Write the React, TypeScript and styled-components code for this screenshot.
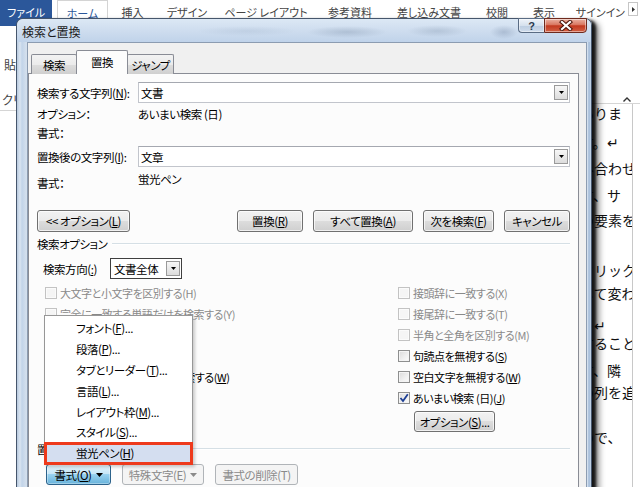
import React from "react";
import styled, { createGlobalStyle, css } from "styled-components";

const GlobalStyle = createGlobalStyle`
  html, body { margin: 0; padding: 0; background: #fff; }
  body { font-family: "Noto Sans CJK JP", "Noto Sans", sans-serif; }
  *, *::before, *::after { box-sizing: border-box; }
`;

const Screen = styled.div`
  position: relative;
  width: 640px;
  height: 487px;
  overflow: hidden;
  background: #fff;
  font-family: "Noto Sans CJK JP", "Noto Sans", sans-serif;
`;

/* ---------- Word background ---------- */
const Word = styled.div`
  display: flex;
  flex-direction: column;
  width: 100%;
  height: 100%;
`;

const RibbonTabs = styled.div`
  display: flex;
  flex: none;
  height: 26px;
  font-size: 11px;
  color: #444;
  font-feature-settings: "palt";
`;

const RibbonTab = styled.div<{ $w: number; $variant?: "file" | "active" | "end" }>`
  flex: none;
  width: ${(p) => p.$w}px;
  height: 100%;
  display: flex;
  justify-content: center;
  padding-top: 3px;
  line-height: 18px;
  white-space: nowrap;
  ${(p) =>
    p.$variant === "file" &&
    css`
      background: #2b579a;
      color: #fff;
    `}
  ${(p) =>
    p.$variant === "active" &&
    css`
      border: 1px solid #d4d4d4;
      border-bottom: none;
      color: #2b579a;
    `}
  ${(p) =>
    p.$variant === "end" &&
    css`
      justify-content: flex-end;
      padding-right: 3px;
    `}
`;

const TabGap = styled.div`
  flex: none;
  width: 5px;
`;

const OverflowBtn = styled.div`
  flex: none;
  width: 10px;
  height: 14px;
  margin-top: 2px;
  border: 1px solid #c6c6c6;
  display: flex;
  align-items: center;
  justify-content: center;
`;

const WordBody = styled.div`
  flex: 1;
  display: flex;
  min-height: 0;
`;

const LeftStrip = styled.div`
  flex: none;
  width: 16px;
  overflow: hidden;
  white-space: nowrap;
  font-size: 12px;
  color: #444;
  font-feature-settings: "palt";
`;

const StripPaste = styled.div`
  padding: 29px 0 0 4px;
  line-height: 20px;
`;

const StripGroup = styled.div`
  margin-top: 15px;
  padding-left: 2px;
  line-height: 20px;
  border-bottom: 1px solid #d5d5d5;
`;

const WordMiddle = styled.div`
  flex: 1;
`;

const RightStrip = styled.div`
  flex: none;
  width: 48px;
  display: flex;
  flex-direction: column;
`;

const RibbonRest = styled.div`
  flex: none;
  height: 78px;
  border-bottom: 1px solid #d5d5d5;
  display: flex;
  align-items: flex-end;
  justify-content: flex-end;
  padding: 0 9px 1px 0;
`;

const DocArea = styled.div`
  flex: 1;
  width: 41px;
  overflow: hidden;
  border-right: 1px solid #c8c8c8;
  font-size: 14px;
  color: #111;
  white-space: nowrap;
`;

const DocLine = styled.div<{ $mt: number }>`
  margin-top: ${(p) => p.$mt}px;
  margin-left: -12px;
  line-height: 18px;
  height: 18px;
`;

/* ---------- Dialog ---------- */
const Dialog = styled.div`
  position: absolute;
  left: 16px;
  top: 18px;
  width: 576px;
  height: 480px;
  display: flex;
  flex-direction: column;
  border: 1px solid #46566c;
  border-bottom: none;
  border-radius: 7px 7px 0 0;
  background: linear-gradient(
    90deg,
    #b7c9de 0px,
    #dae5f1 3px,
    #c2d4e9 5px,
    #d3dfed 9px,
    #d3dfed calc(100% - 7px),
    #e3ecf6 calc(100% - 4px),
    #9fb8d6 calc(100% - 2px),
    #c8d7e9 100%
  );
  box-shadow: 4px 2px 3px rgba(0, 0, 0, 0.85), 7px 4px 6px rgba(0, 0, 0, 0.45);
  font-family: "Noto Sans CJK JP", "Noto Sans", sans-serif;
  font-size: 11.5px;
  letter-spacing: -0.45px;
  font-feature-settings: "palt";
  color: #000;
`;

const TitleBar = styled.div`
  flex: none;
  height: 23px;
  display: flex;
  align-items: flex-start;
  padding: 0 4px 0 5px;
  border-radius: 6px 6px 0 0;
  background:
    radial-gradient(ellipse 40px 6px at 330px 13px, rgba(120, 140, 165, 0.35), transparent),
    radial-gradient(ellipse 30px 6px at 420px 12px, rgba(120, 140, 165, 0.3), transparent),
    radial-gradient(ellipse 14px 7px at 487px 13px, rgba(110, 130, 160, 0.35), transparent),
    radial-gradient(ellipse 50px 5px at 230px 12px, rgba(150, 170, 195, 0.25), transparent),
    linear-gradient(180deg, #dce8f5 0%, #cddcee 55%, #c0d3ea 100%);
`;

const Title = styled.div`
  padding-top: 1px;
  line-height: 23px;
  font-size: 12px;
  letter-spacing: 0;
  color: #1a1a1a;
`;

const CaptionGroup = styled.div`
  margin-left: auto;
  margin-top: -1px;
  display: flex;
`;

const CaptionBtn = styled.div<{ $kind: "help" | "close" }>`
  height: 15px;
  display: flex;
  align-items: center;
  justify-content: center;
  border: 1px solid #5a6c84;
  box-shadow: inset 0 0 0 1px rgba(255, 255, 255, 0.45);
  ${(p) =>
    p.$kind === "help"
      ? css`
          width: 26px;
          border-right: none;
          border-radius: 0 0 0 4px;
          background: linear-gradient(180deg, #eef3f9 0%, #d6e1ee 50%, #bccde1 51%, #cfdcec 100%);
          font-size: 11px;
          font-weight: bold;
          color: #2b3a4e;
          font-family: "Liberation Sans", sans-serif;
        `
      : css`
          width: 43px;
          border-color: #6e2a1e;
          border-radius: 0 0 4px 0;
          background: linear-gradient(180deg, #eab2a3 0%, #d9765f 45%, #c2391f 52%, #d26145 100%);
        `}
`;

const FrameBody = styled.div`
  flex: 1;
  display: flex;
  padding: 0 4px 0 10px;
  min-height: 0;
`;

const Client = styled.div`
  flex: 1;
  display: flex;
  flex-direction: column;
  background: #f0f0f0;
  border: 1px solid #8c9cb1;
  border-bottom: none;
  padding: 7px 7px 0 0;
`;

const TabStrip = styled.div`
  flex: none;
  height: 24px;
  margin-bottom: -1px;
  padding-left: 3px;
  display: flex;
  align-items: flex-end;
  position: relative;
  z-index: 1;
`;

const Tab = styled.div<{ $w: number; $selected?: boolean; $first?: boolean }>`
  flex: none;
  width: ${(p) => p.$w}px;
  margin-left: ${(p) => (p.$first ? 0 : -1)}px;
  border: 1px solid #898c95;
  border-bottom: none;
  border-radius: 2px 2px 0 0;
  display: flex;
  justify-content: center;
  align-items: center;
  ${(p) =>
    p.$selected
      ? css`
          height: 24px;
          background: #fcfcfc;
          position: relative;
          z-index: 1;
          padding-bottom: 2px;
        `
      : css`
          height: 20px;
          background: linear-gradient(180deg, #f3f3f3 0%, #ebebeb 50%, #dddddd 51%, #cfcfcf 100%);
          padding-top: 1px;
        `}
`;

const Panel = styled.div`
  flex: 1;
  display: flex;
  flex-direction: column;
  background: #fcfcfc;
  border: 1px solid #898c95;
  border-bottom: none;
  padding: 8px 8px 0 8px;
`;

const FieldRow = styled.div<{ $mt?: number }>`
  flex: none;
  display: flex;
  align-items: center;
  height: 21px;
  margin-top: ${(p) => p.$mt ?? 0}px;
`;

const FieldLabel = styled.div`
  flex: none;
  width: 101px;
  white-space: nowrap;
`;

const Combo = styled.div`
  flex: 1;
  height: 21px;
  display: flex;
  align-items: center;
  padding-left: 2px;
  background: #fff;
  border: 1px solid #c2c5cc;
  border-top-color: #a5a8b0;
`;

const DropBtn = styled.span`
  flex: none;
  width: 14px;
  height: 15px;
  margin-left: auto;
  margin-right: 1px;
  border: 1px solid #9a9a9a;
  background: linear-gradient(180deg, #f7f7f7, #dcdcdc);
  display: flex;
  align-items: center;
  justify-content: center;
`;

const InfoRow = styled.div<{ $h: number; $mt?: number }>`
  flex: none;
  display: flex;
  align-items: flex-start;
  height: ${(p) => p.$h}px;
  margin-top: ${(p) => p.$mt ?? 0}px;
  white-space: nowrap;
`;

const InfoLabel = styled.div<{ $pt?: number }>`
  flex: none;
  width: 101px;
  padding-top: ${(p) => p.$pt ?? 0}px;
  line-height: 18px;
`;

const InfoValue = styled.div<{ $pt?: number }>`
  padding-top: ${(p) => p.$pt ?? 0}px;
  line-height: 18px;
`;

const ButtonRow = styled.div`
  flex: none;
  display: flex;
  justify-content: space-between;
  margin-top: 17px;
`;

const BtnGroup = styled.div<{ $gap: number }>`
  display: flex;
  gap: ${(p) => p.$gap}px;
`;

const Btn = styled.div<{ $w: number; $h?: number; $kind?: "disabled" | "pressed" }>`
  flex: none;
  width: ${(p) => p.$w}px;
  height: ${(p) => p.$h ?? 22}px;
  display: flex;
  align-items: center;
  justify-content: center;
  gap: 4px;
  white-space: nowrap;
  border: 1px solid #707070;
  border-radius: 3px;
  background: linear-gradient(180deg, #f2f2f2 0%, #ebebeb 49%, #dddddd 50%, #cfcfcf 100%);
  box-shadow: inset 0 0 0 1px rgba(255, 255, 255, 0.7);
  ${(p) =>
    p.$kind === "disabled" &&
    css`
      border-color: #b0b4b8;
      background: #f4f4f4;
      color: #8a8a8a;
      box-shadow: none;
    `}
  ${(p) =>
    p.$kind === "pressed" &&
    css`
      border-color: #2c628b;
      background: linear-gradient(180deg, #e5f4fc 0%, #c4e5f6 49%, #98d1ef 50%, #68b3db 100%);
      box-shadow: inset 0 0 0 1px rgba(255, 255, 255, 0.35);
    `}
`;

const SectionRow = styled.div<{ $mt: number }>`
  flex: none;
  display: flex;
  align-items: center;
  height: 18px;
  margin-top: ${(p) => p.$mt}px;
  white-space: nowrap;
`;

const SectionLine = styled.div`
  flex: 1;
  margin-left: 5px;
  height: 2px;
  border-top: 1px solid #d5dfe5;
  border-bottom: 1px solid #fff;
`;

const DirectionRow = styled.div`
  flex: none;
  display: flex;
  align-items: center;
  height: 21px;
  margin-top: 5px;
  padding-left: 6px;
`;

const DirLabel = styled.div`
  flex: none;
  width: 67px;
  white-space: nowrap;
`;

const Select = styled.div`
  flex: none;
  width: 72px;
  height: 21px;
  display: flex;
  align-items: center;
  padding-left: 3px;
  background: #fff;
  border: 1px solid #3f3f3f;
`;

const OptionsArea = styled.div`
  flex: none;
  display: flex;
  margin-top: 3px;
  padding-left: 8px;
`;

const OptCol = styled.div<{ $w?: number }>`
  flex: none;
  width: ${(p) => (p.$w ? `${p.$w}px` : "auto")};
  display: flex;
  flex-direction: column;
`;

const Option = styled.div<{ $disabled?: boolean }>`
  flex: none;
  height: 21px;
  display: flex;
  align-items: center;
  gap: 3px;
  font-size: 11px;
  white-space: nowrap;
  color: ${(p) => (p.$disabled ? "#8a8a8a" : "#000")};
`;

const Box = styled.span<{ $disabled?: boolean }>`
  flex: none;
  width: 12px;
  height: 12px;
  display: flex;
  align-items: center;
  justify-content: center;
  border: 1px solid ${(p) => (p.$disabled ? "#c3c3c3" : "#8e8f8f")};
  background: ${(p) =>
    p.$disabled ? "#f5f5f5" : "linear-gradient(135deg, #dadada 0%, #f0f0f0 60%, #fbfbfb 100%)"};
  box-shadow: inset 0 0 0 1px ${(p) => (p.$disabled ? "#fbfbfb" : "#f4f4f4")};
`;

const OptionBtnWrap = styled.div`
  margin: 3px 0 0 16px;
`;

const BottomRow = styled.div`
  flex: none;
  display: flex;
  gap: 11px;
  margin-top: 6px;
  padding-left: 9px;
`;

const Key = styled.span`
  text-decoration: underline;
  text-underline-offset: 1px;
`;

/* ---------- popup menu ---------- */
const Menu = styled.div`
  position: absolute;
  left: 44px;
  top: 315px;
  width: 149px;
  padding-top: 2px;
  background: #fff;
  border: 1px solid #979797;
  box-shadow: 2px 2px 3px rgba(0, 0, 0, 0.2);
  font-family: "Noto Sans CJK JP", "Noto Sans", sans-serif;
  font-size: 11.5px;
  letter-spacing: -0.45px;
  font-feature-settings: "palt";
  color: #000;
`;

const MenuItem = styled.div<{ $active?: boolean }>`
  height: 20.8px;
  display: flex;
  align-items: center;
  padding-left: 31px;
  white-space: nowrap;
  ${(p) =>
    p.$active &&
    css`
      background: #d4def0;
      outline: 3px solid #ee3a1c;
      outline-offset: -2px;
      position: relative;
    `}
`;

const Tri = ({ color = "#000", w = 7, h = 4 }: { color?: string; w?: number; h?: number }) => (
  <svg width={w} height={h} viewBox={`0 0 ${w} ${h}`}>
    <path d={`M0 0H${w}L${w / 2} ${h}Z`} fill={color} />
  </svg>
);

const CheckMark = () => (
  <svg width="10" height="10" viewBox="0 0 10 10">
    <path d="M1.5 5 L4 8 L8.8 1.3" fill="none" stroke="#1c3e94" strokeWidth="1.8" />
  </svg>
);

const CloseGlyph = () => (
  <svg width="16" height="11" viewBox="0 0 16 11">
    <path d="M4 2 L12 9 M12 2 L4 9" stroke="#4a1409" strokeWidth="4.2" strokeLinecap="square" />
    <path d="M4 2 L12 9 M12 2 L4 9" stroke="#fff" strokeWidth="2.2" strokeLinecap="square" />
  </svg>
);

const Caret = () => (
  <svg width="8" height="5" viewBox="0 0 8 5">
    <path d="M0.5 4.5 L4 1 L7.5 4.5" fill="none" stroke="#333" strokeWidth="1.4" />
  </svg>
);

const docLines: { t: string; mt: number }[] = [
  { t: "ありま", mt: 0 },
  { t: "す。↵", mt: 11 },
  { t: "み合わせ", mt: 8 },
  { t: "す、サ", mt: 9 },
  { t: "の要素を", mt: 7 },
  { t: "クリック", mt: 32 },
  { t: "して変わ", mt: 5 },
  { t: "。↵", mt: 14 },
  { t: "することで", mt: 0 },
  { t: "す、隣", mt: 9 },
  { t: "の列を追", mt: 4 },
  { t: "ので、", mt: 27 },
];

const ribbonTabs: { label: string; w: number; variant?: "file" | "active" | "end" }[] = [
  { label: "ホーム", w: 51, variant: "active" },
  { label: "挿入", w: 49 },
  { label: "デザイン", w: 60 },
  { label: "ページ レイアウト", w: 98 },
  { label: "参考資料", w: 70 },
  { label: "差し込み文書", w: 88 },
  { label: "校閲", w: 48 },
  { label: "表示", w: 46 },
  { label: "サインイン", w: 61, variant: "end" },
];

type Opt = { text: string; key?: string; disabled?: boolean; checked?: boolean };

const leftOptions: Opt[] = [
  { text: "大文字と小文字を区別する(H)", disabled: true },
  { text: "完全に一致する単語だけを検索する(Y)", disabled: true },
  { text: "ワイルドカードを使用する", key: "U" },
  { text: "あいまい検索 (英)", key: "K" },
  { text: "英単語の異なる活用形も検索する", key: "W" },
];

const rightOptions: Opt[] = [
  { text: "接頭辞に一致する(X)", disabled: true },
  { text: "接尾辞に一致する(T)", disabled: true },
  { text: "半角と全角を区別する(M)", disabled: true },
  { text: "句読点を無視する", key: "S" },
  { text: "空白文字を無視する", key: "W" },
  { text: "あいまい検索 (日)", key: "J", checked: true },
];

const menuItems: { text: string; key: string; tail: string }[] = [
  { text: "フォント", key: "F", tail: "..." },
  { text: "段落", key: "P", tail: "..." },
  { text: "タブとリーダー", key: "T", tail: "..." },
  { text: "言語", key: "L", tail: "..." },
  { text: "レイアウト枠", key: "M", tail: "..." },
  { text: "スタイル", key: "S", tail: "..." },
  { text: "蛍光ペン", key: "H", tail: "" },
];

const Label = ({ text, k, tail = "" }: { text: string; k?: string; tail?: string }) => (
  <span>
    {text}
    {k && (
      <>
        (<Key>{k}</Key>)
      </>
    )}
    {tail}
  </span>
);

const OptionItem = ({ o }: { o: Opt }) => (
  <Option $disabled={o.disabled}>
    <Box $disabled={o.disabled}>{o.checked && <CheckMark />}</Box>
    <Label text={o.text} k={o.key} />
  </Option>
);

export default function App() {
  return (
    <>
      <GlobalStyle />
      <Screen>
        <Word>
          <RibbonTabs>
            <RibbonTab $w={52} $variant="file">
              ファイル
            </RibbonTab>
            <TabGap />
            {ribbonTabs.map((t) => (
              <RibbonTab key={t.label} $w={t.w} $variant={t.variant}>
                {t.label}
              </RibbonTab>
            ))}
            <OverflowBtn>
              <svg width="3" height="5" viewBox="0 0 3 5">
                <path d="M0 0L3 2.5L0 5Z" fill="#333" />
              </svg>
            </OverflowBtn>
          </RibbonTabs>
          <WordBody>
            <LeftStrip>
              <StripPaste>貼り付け</StripPaste>
              <StripGroup>クリップボード</StripGroup>
            </LeftStrip>
            <WordMiddle />
            <RightStrip>
              <RibbonRest>
                <Caret />
              </RibbonRest>
              <DocArea>
                {docLines.map((l, i) => (
                  <DocLine key={i} $mt={l.mt}>
                    {l.t}
                  </DocLine>
                ))}
              </DocArea>
            </RightStrip>
          </WordBody>
        </Word>

        <Dialog>
          <TitleBar>
            <Title>検索と置換</Title>
            <CaptionGroup>
              <CaptionBtn $kind="help">?</CaptionBtn>
              <CaptionBtn $kind="close">
                <CloseGlyph />
              </CaptionBtn>
            </CaptionGroup>
          </TitleBar>
          <FrameBody>
            <Client>
              <TabStrip>
                <Tab $w={46} $first>
                  検索
                </Tab>
                <Tab $w={52} $selected>
                  置換
                </Tab>
                <Tab $w={47}>ジャンプ</Tab>
              </TabStrip>
              <Panel>
                <FieldRow>
                  <FieldLabel>
                    <Label text="検索する文字列" k="N" tail=":" />
                  </FieldLabel>
                  <Combo>
                    <span>文書</span>
                    <DropBtn>
                      <Tri w={5} h={3} />
                    </DropBtn>
                  </Combo>
                </FieldRow>
                <InfoRow $h={20} $mt={1}>
                  <InfoLabel $pt={1}>オプション：</InfoLabel>
                  <InfoValue $pt={1}>あいまい検索 (日)</InfoValue>
                </InfoRow>
                <InfoRow $h={18}>
                  <InfoLabel>書式：</InfoLabel>
                </InfoRow>
                <FieldRow $mt={4}>
                  <FieldLabel>
                    <Label text="置換後の文字列" k="I" tail=":" />
                  </FieldLabel>
                  <Combo>
                    <span>文章</span>
                    <DropBtn>
                      <Tri w={5} h={3} />
                    </DropBtn>
                  </Combo>
                </FieldRow>
                <InfoRow $h={26}>
                  <InfoLabel $pt={7}>書式：</InfoLabel>
                  <InfoValue $pt={3}>蛍光ペン</InfoValue>
                </InfoRow>

                <ButtonRow>
                  <Btn $w={93}>
                    <Label text="<< オプション" k="L" />
                  </Btn>
                  <BtnGroup $gap={10}>
                    <Btn $w={66}>
                      <Label text="置換" k="R" />
                    </Btn>
                    <Btn $w={100}>
                      <Label text="すべて置換" k="A" />
                    </Btn>
                    <Btn $w={71}>
                      <Label text="次を検索" k="F" />
                    </Btn>
                    <Btn $w={66}>
                      <Label text="キャンセル" />
                    </Btn>
                  </BtnGroup>
                </ButtonRow>

                <SectionRow $mt={3}>
                  <span>検索オプション</span>
                  <SectionLine />
                </SectionRow>

                <DirectionRow>
                  <DirLabel>
                    <Label text="検索方向" k=":" />
                  </DirLabel>
                  <Select>
                    <span>文書全体</span>
                    <DropBtn>
                      <Tri w={5} h={3} />
                    </DropBtn>
                  </Select>
                </DirectionRow>

                <OptionsArea>
                  <OptCol $w={353}>
                    {leftOptions.map((o) => (
                      <OptionItem key={o.text} o={o} />
                    ))}
                  </OptCol>
                  <OptCol>
                    {rightOptions.map((o) => (
                      <OptionItem key={o.text} o={o} />
                    ))}
                    <OptionBtnWrap>
                      <Btn $w={81} $h={21}>
                        <Label text="オプション" k="S" tail="..." />
                      </Btn>
                    </OptionBtnWrap>
                  </OptCol>
                </OptionsArea>

                <SectionRow $mt={8}>
                  <span>置換</span>
                  <SectionLine />
                </SectionRow>

                <BottomRow>
                  <Btn $w={65} $h={21} $kind="pressed">
                    <Label text="書式" k="O" />
                    <Tri />
                  </Btn>
                  <Btn $w={82} $h={21} $kind="disabled">
                    <Label text="特殊文字(E)" />
                    <Tri color="#8a8a8a" />
                  </Btn>
                  <Btn $w={83} $h={21} $kind="disabled">
                    <Label text="書式の削除(T)" />
                  </Btn>
                </BottomRow>
              </Panel>
            </Client>
          </FrameBody>
        </Dialog>

        <Menu>
          {menuItems.map((m) => (
            <MenuItem key={m.text} $active={m.key === "H"}>
              <Label text={m.text} k={m.key} tail={m.tail} />
            </MenuItem>
          ))}
        </Menu>
      </Screen>
    </>
  );
}
